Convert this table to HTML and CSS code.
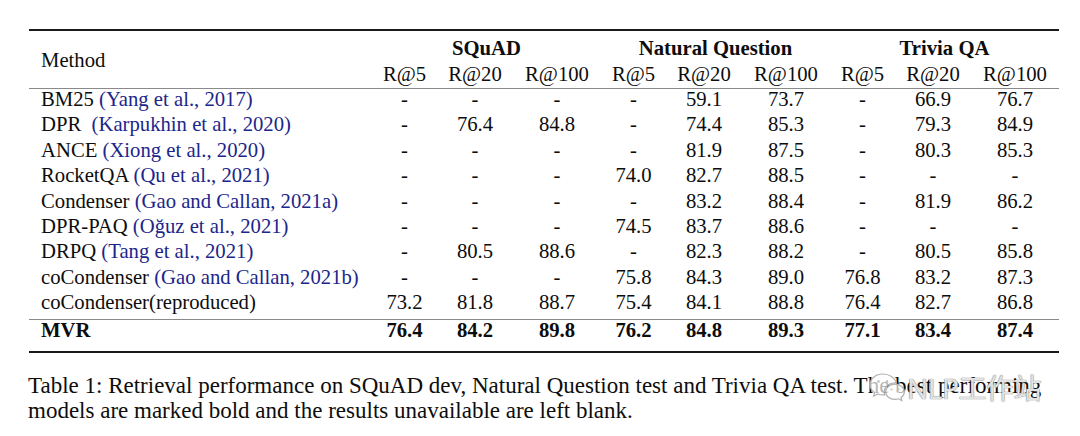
FILE: index.html
```html
<!DOCTYPE html>
<html>
<head>
<meta charset="utf-8">
<title>Table 1</title>
<link rel="stylesheet" href="styles.css">
</head>
<body>
<div class="page">
  <div class="tbl">
    <div class="thead">
      <div class="method">Method</div>
      <div class="grp g1">SQuAD</div>
      <div class="grp g2">Natural Question</div>
      <div class="grp g3">Trivia QA</div>
      <div class="sub">R@5</div><div class="sub">R@20</div><div class="sub">R@100</div>
      <div class="sub">R@5</div><div class="sub">R@20</div><div class="sub">R@100</div>
      <div class="sub">R@5</div><div class="sub">R@20</div><div class="sub">R@100</div>
    </div>
    <div class="tbody">
      <div class="row"><div class="name">BM25 <span class="cite">(Yang et al., 2017)</span></div><div>-</div><div>-</div><div>-</div><div>-</div><div>59.1</div><div>73.7</div><div>-</div><div>66.9</div><div>76.7</div></div>
      <div class="row"><div class="name">DPR &nbsp;<span class="cite">(Karpukhin et al., 2020)</span></div><div>-</div><div>76.4</div><div>84.8</div><div>-</div><div>74.4</div><div>85.3</div><div>-</div><div>79.3</div><div>84.9</div></div>
      <div class="row"><div class="name">ANCE <span class="cite">(Xiong et al., 2020)</span></div><div>-</div><div>-</div><div>-</div><div>-</div><div>81.9</div><div>87.5</div><div>-</div><div>80.3</div><div>85.3</div></div>
      <div class="row"><div class="name">RocketQA <span class="cite">(Qu et al., 2021)</span></div><div>-</div><div>-</div><div>-</div><div>74.0</div><div>82.7</div><div>88.5</div><div>-</div><div>-</div><div>-</div></div>
      <div class="row"><div class="name">Condenser <span class="cite">(Gao and Callan, 2021a)</span></div><div>-</div><div>-</div><div>-</div><div>-</div><div>83.2</div><div>88.4</div><div>-</div><div>81.9</div><div>86.2</div></div>
      <div class="row"><div class="name">DPR-PAQ <span class="cite">(Oğuz et al., 2021)</span></div><div>-</div><div>-</div><div>-</div><div>74.5</div><div>83.7</div><div>88.6</div><div>-</div><div>-</div><div>-</div></div>
      <div class="row"><div class="name">DRPQ <span class="cite">(Tang et al., 2021)</span></div><div>-</div><div>80.5</div><div>88.6</div><div>-</div><div>82.3</div><div>88.2</div><div>-</div><div>80.5</div><div>85.8</div></div>
      <div class="row"><div class="name">coCondenser <span class="cite">(Gao and Callan, 2021b)</span></div><div>-</div><div>-</div><div>-</div><div>75.8</div><div>84.3</div><div>89.0</div><div>76.8</div><div>83.2</div><div>87.3</div></div>
      <div class="row"><div class="name">coCondenser(reproduced)</div><div>73.2</div><div>81.8</div><div>88.7</div><div>75.4</div><div>84.1</div><div>88.8</div><div>76.4</div><div>82.7</div><div>86.8</div></div>
    </div>
    <div class="tfoot">
      <div class="row best"><div class="name">MVR</div><div>76.4</div><div>84.2</div><div>89.8</div><div>76.2</div><div>84.8</div><div>89.3</div><div>77.1</div><div>83.4</div><div>87.4</div></div>
    </div>
  </div>
  <div class="caption">
    <p class="cap-line">Table 1: Retrieval performance on SQuAD dev, Natural Question test and Trivia QA test. The best performing</p>
    <p class="cap-line">models are marked bold and the results unavailable are left blank.</p>
    <div class="watermark">
      <svg class="wm-icon" width="38" height="32" viewBox="0 0 38 32">
        <path d="M15 2 C7.5 2 2 7 2 12.5 C2 16 3.8 18.8 6.6 20.6 L5.6 24.2 L9.8 22 C11.4 22.6 13.2 22.9 15 22.9 C15.6 22.9 16.2 22.9 16.8 22.8 C16.4 21.8 16.2 20.8 16.2 19.8 C16.2 14.8 21 10.8 27 10.8 C27.5 10.8 27.9 10.8 28.3 10.9 C27 5.8 21.5 2 15 2 Z" fill="rgba(255,255,255,0.7)" stroke="#b0b0b0" stroke-width="1.2"/>
        <path d="M27 12.2 C21.8 12.2 17.6 15.6 17.6 19.8 C17.6 24 21.8 27.4 27 27.4 C28.2 27.4 29.4 27.2 30.4 26.8 L33.8 28.6 L33 25.6 C35 24.2 36.4 22.1 36.4 19.8 C36.4 15.6 32.2 12.2 27 12.2 Z" fill="rgba(255,255,255,0.7)" stroke="#b0b0b0" stroke-width="1.2"/>
        <circle cx="10.5" cy="9.5" r="1.3" fill="#bdbdbd"/>
        <circle cx="19" cy="9.5" r="1.3" fill="#bdbdbd"/>
        <circle cx="23.5" cy="17.5" r="1" fill="#bdbdbd"/>
        <circle cx="30.5" cy="17.5" r="1" fill="#bdbdbd"/>
      </svg>
      <span class="wm-text">NLP工作站</span>
    </div>
  </div>
</div>
</body>
</html>
```

FILE: styles.css
```css
html, body {
  margin: 0;
  padding: 0;
  background: #ffffff;
}

body {
  font-family: "Liberation Serif", "Times New Roman", serif;
  color: #0d0d0d;
}

.page {
  padding-top: 29px;
}

.tbl {
  margin-left: 29px;
  width: 1030px;
  border-top: 2px solid #1a1a1a;
  border-bottom: 2px solid #1a1a1a;
  font-size: 20.7px;
}

.thead {
  display: grid;
  grid-template-columns: 343px repeat(3, 65px 76px 88px);
  grid-template-rows: 26px 26px;
  padding-top: 3.5px;
  padding-bottom: 1.5px;
  line-height: 26px;
  border-bottom: 1px solid #8a8a8a;
}

.method {
  grid-row: 1 / 3;
  grid-column: 1;
  align-self: center;
  padding-left: 12px;
  padding-bottom: 2px;
}

.grp {
  grid-row: 1;
  font-weight: bold;
  text-align: center;
}

.g1 { grid-column: 2 / 5; }
.g2 { grid-column: 5 / 8; }
.g3 { grid-column: 8 / 11; }

.sub {
  grid-row: 2;
  text-align: center;
}

.tbody {
  padding-bottom: 1.4px;
  border-bottom: 1px solid #8a8a8a;
}

.row {
  display: grid;
  grid-template-columns: 343px repeat(3, 65px 76px 88px);
  line-height: 20px;
  padding-bottom: 5.4px;
  text-align: center;
}

.row .name {
  text-align: left;
  padding-left: 12px;
  white-space: pre;
}

.cite {
  color: #1c268a;
}

.row.best {
  font-weight: bold;
  padding-bottom: 11px;
}

.caption {
  position: relative;
  margin: 20px 0 0 28px;
  width: 1030px;
  font-size: 23px;
  line-height: 25.5px;
}

.cap-line {
  margin: 0;
  white-space: nowrap;
}

.watermark {
  position: absolute;
  left: 840px;
  top: -1px;
  display: flex;
  align-items: center;
  gap: 1px;
  pointer-events: none;
}

.wm-icon {
  display: block;
}

.wm-text {
  font-family: "Noto Sans", "Noto Sans CJK SC", sans-serif;
  font-size: 28px;
  line-height: 32px;
  color: rgba(255, 255, 255, 0.8);
  text-shadow: 0 0 1px #7a7a7a, 0 0 1px #7a7a7a;
  letter-spacing: -0.5px;
}
```
